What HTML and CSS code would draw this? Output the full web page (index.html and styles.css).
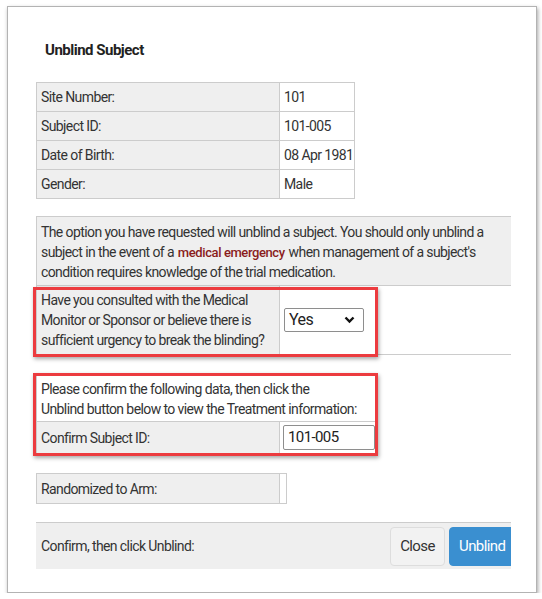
FILE: index.html
```html
<!DOCTYPE html>
<html>
<head>
<meta charset="utf-8">
<link rel="stylesheet" href="styles.css">
</head>
<body>
<div class="frame">
  <h1 class="title">Unblind Subject</h1>

  <table class="grid info">
    <colgroup><col class="c-lbl"><col></colgroup>
    <tr><td class="lbl">Site Number:</td><td class="val">101</td></tr>
    <tr><td class="lbl">Subject ID:</td><td class="val">101-005</td></tr>
    <tr><td class="lbl">Date of Birth:</td><td class="val">08 Apr 1981</td></tr>
    <tr><td class="lbl">Gender:</td><td class="val">Male</td></tr>
  </table>

  <div class="section warn-section">
    <table class="grid wide">
      <colgroup><col class="c-lbl"><col></colgroup>
      <tr><td class="notice" colspan="2"><span class="ln">The option you have requested will unblind a subject. You should only unblind a</span><span class="ln">subject in the event of a <span class="em">medical emergency</span> when management of a subject's</span><span class="ln">condition requires knowledge of the trial medication.</span></td></tr>
      <tr class="q-row"><td class="lbl q"><span class="ln">Have you consulted with the Medical</span><span class="ln">Monitor or Sponsor or believe there is</span><span class="ln">sufficient urgency to break the blinding?</span></td>
        <td class="val"><div class="select"><span>Yes</span><svg width="11" height="8" viewBox="0 0 11 8"><path d="M1.5 1.5 L5.5 5.5 L9.5 1.5" fill="none" stroke="#111" stroke-width="2.4"/></svg></div></td></tr>
    </table>
    <div class="mark mark-q"></div>
  </div>

  <div class="section confirm-section">
    <table class="grid narrow">
      <colgroup><col class="c-lbl"><col></colgroup>
      <tr><td class="plain" colspan="2"><span class="ln">Please confirm the following data, then click the</span><span class="ln">Unblind button below to view the Treatment information:</span></td></tr>
      <tr class="c-row"><td class="lbl">Confirm Subject ID:</td><td class="val inp-cell"><div class="input">101-005</div></td></tr>
    </table>
    <div class="mark mark-c"></div>
  </div>

  <table class="grid arm">
    <colgroup><col class="c-lbl"><col></colgroup>
    <tr><td class="lbl">Randomized to Arm:</td><td class="val stub"></td></tr>
  </table>

  <div class="footer">
    <span class="f-text">Confirm, then click Unblind:</span>
    <div class="buttons">
      <span class="btn btn-close">Close</span>
      <span class="btn btn-primary">Unblind</span>
    </div>
  </div>
</div>
</body>
</html>
```

FILE: styles.css
```css
html, body {
  margin: 0;
  padding: 0;
  background: #ffffff;
}
body {
  font-family: Roboto, "Liberation Sans", sans-serif;
  color: #333333;
}
.frame {
  box-sizing: border-box;
  margin: 6px 0 0 7px;
  width: 530px;
  height: 587px;
  border: 1px solid #b3b3b3;
  box-shadow: 1px 2px 4px rgba(0,0,0,0.35);
  padding: 0 0 0 28px;
  overflow: hidden;
}
.title {
  margin: 0;
  padding: 34px 0 0 9px;
  height: 41px;
  font-size: 15px;
  font-weight: bold;
  letter-spacing: -0.5px;
  color: #222;
}
.grid {
  border-collapse: collapse;
  table-layout: fixed;
  font-size: 14px;
  letter-spacing: -0.6px;
}
.c-lbl {
  width: 243px;
}
.grid td {
  border: 1px solid #cccccc;
  padding: 0 4px;
  white-space: nowrap;
}
.ln {
  display: block;
}
.lbl {
  background: #efefef;
}
.val {
  background: #ffffff;
}
.info {
  width: 319px;
}
.info td {
  height: 28px;
}
.section {
  position: relative;
}
.warn-section {
  margin-top: 17px;
}
.wide {
  width: 475px;
}
.notice {
  background: #efefef;
  padding: 5px 4px 3px 4px !important;
  line-height: 20px;
  border-right: none !important;
}
.em {
  color: #8a1c1c;
  font-weight: 500;
  font-size: 13px;
  line-height: 1;
  letter-spacing: -0.4px;
  margin: 0 1px;
}
.q-row td {
  height: 68px;
}
.q {
  line-height: 20px;
  padding-top: 0 !important;
}
.wide .val {
  border-right: none;
}
.select {
  display: flex;
  align-items: center;
  justify-content: space-between;
  box-sizing: border-box;
  width: 80px;
  height: 24px;
  border: 1px solid #8e8e8e;
  border-radius: 2px;
  padding: 0 8px 0 4px;
  font-size: 16px;
  color: #222;
  margin-top: -1px;
}
.mark {
  position: absolute;
  border: 3px solid #ec3b3f;
  box-shadow: 1px 2px 4px rgba(0,0,0,0.35);
  pointer-events: none;
}
.mark-q {
  left: -3px;
  width: 339px;
  bottom: -2px;
  height: 64px;
}
.confirm-section {
  margin-top: 20px;
}
.narrow {
  width: 341px;
}
.plain {
  background: #ffffff;
  line-height: 20px;
  padding: 3px 4px 2px 4px !important;
}
.c-row td {
  height: 31px;
}
.inp-cell {
  padding: 0 1px 0 3px !important;
}
.input {
  box-sizing: border-box;
  height: 25px;
  border: 1px solid #8e8e8e;
  border-radius: 2px;
  padding: 0 4px;
  line-height: 23px;
  font-size: 15px;
  color: #222;
}
.mark-c {
  left: -3px;
  width: 339px;
  top: -2px;
  bottom: -2px;
}
.arm {
  margin-top: 19px;
  width: 251px;
}
.arm td {
  height: 29px;
}
.stub {
  padding: 0 !important;
}
.footer {
  margin-top: 18px;
  width: 475px;
  box-sizing: border-box;
  height: 47px;
  background: #efefef;
  border-top: 1px solid #cccccc;
  display: flex;
  align-items: center;
  justify-content: space-between;
  padding-left: 5px;
  font-size: 14px;
  letter-spacing: -0.6px;
  overflow: hidden;
}
.buttons {
  display: flex;
  gap: 4px;
  margin-right: -12px;
}
.btn {
  box-sizing: border-box;
  height: 39px;
  display: flex;
  align-items: center;
  font-size: 15px;
  letter-spacing: -0.6px;
  border-radius: 4px;
}
.btn-close {
  width: 55px;
  justify-content: center;
  background: #f2f2f2;
  border: 1px solid #dddddd;
  color: #333;
}
.btn-primary {
  width: 74px;
  padding-left: 9px;
  background: #3a8fd0;
  border: 1px solid #3a8fd0;
  color: #fff;
}
```
